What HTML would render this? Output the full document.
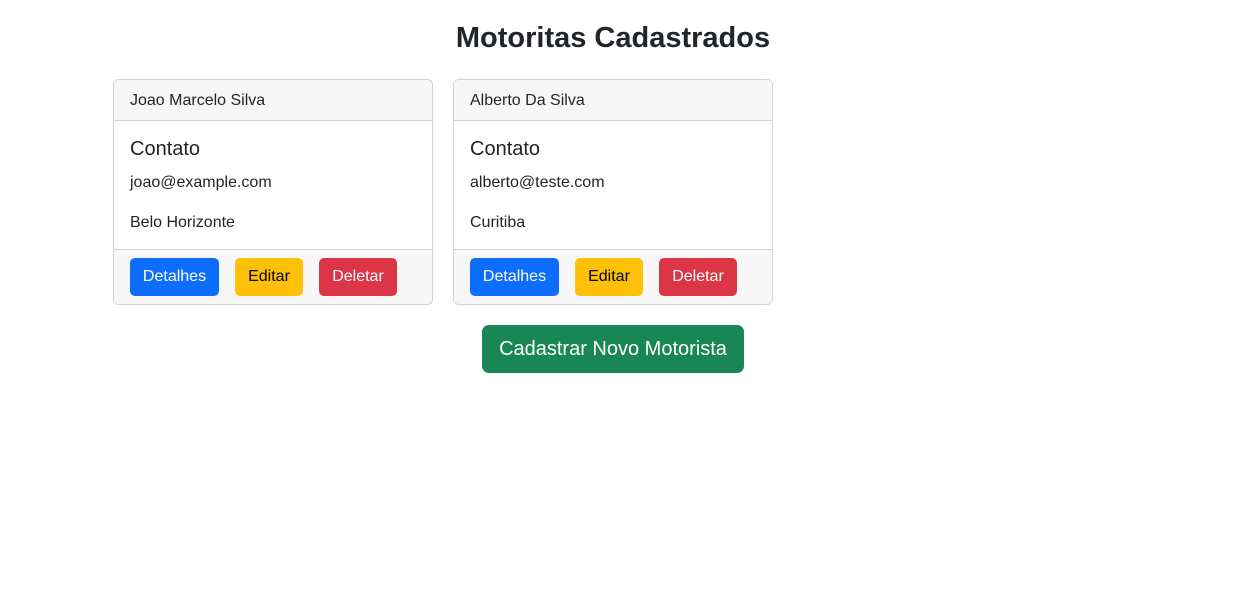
<!DOCTYPE html>
<html><head><meta charset="utf-8"><style>
*{box-sizing:border-box}
body{margin:0;background:#fff;font-family:"Liberation Sans",Arial,sans-serif;color:#212529;width:1235px;height:591px;position:relative}
h1{position:absolute;top:21px;left:0;width:1226px;text-align:center;margin:0;font-size:29px;font-weight:bold;line-height:34px}
.card{position:absolute;top:79px;width:320px;height:226px;border:1px solid #d3d3d3;border-radius:6px;overflow:hidden}
.hd{height:41px;background:#f7f7f7;border-bottom:1px solid #d3d3d3;padding:12px 16px;font-size:16px;line-height:18px}
.bd{height:128px;padding:0 16px;position:relative}
.bd .t{position:absolute;top:17px;font-size:20px}
.bd .a{position:absolute;top:53px;font-size:16px}
.bd .b{position:absolute;top:93px;font-size:16px}
.ft{height:56px;background:#f7f7f7;border-top:1px solid #d3d3d3;position:relative}
.btn{position:absolute;top:8px;height:38px;border-radius:5px;font-size:16px;line-height:38px;text-align:center}
.p{left:16px;width:89px;background:#0d6efd;color:#fff}
.w{left:121px;width:68px;background:#ffc107;color:#000}
.d{left:205px;width:78px;background:#dc3545;color:#fff}
.big{position:absolute;left:482px;top:325px;width:262px;height:48px;background:#198754;color:#fff;border-radius:7px;font-size:20px;line-height:48px;text-align:center}
</style></head><body>
<h1>Motoritas Cadastrados</h1>
<div class="card" style="left:113px"><div class="hd">Joao Marcelo Silva</div><div class="bd"><div class="t">Contato</div><div class="a">joao@example.com</div><div class="b">Belo Horizonte</div></div><div class="ft"><div class="btn p">Detalhes</div><div class="btn w">Editar</div><div class="btn d">Deletar</div></div></div>
<div class="card" style="left:453px"><div class="hd">Alberto Da Silva</div><div class="bd"><div class="t">Contato</div><div class="a">alberto@teste.com</div><div class="b">Curitiba</div></div><div class="ft"><div class="btn p">Detalhes</div><div class="btn w">Editar</div><div class="btn d">Deletar</div></div></div>
<div class="big">Cadastrar Novo Motorista</div>
</body></html>
